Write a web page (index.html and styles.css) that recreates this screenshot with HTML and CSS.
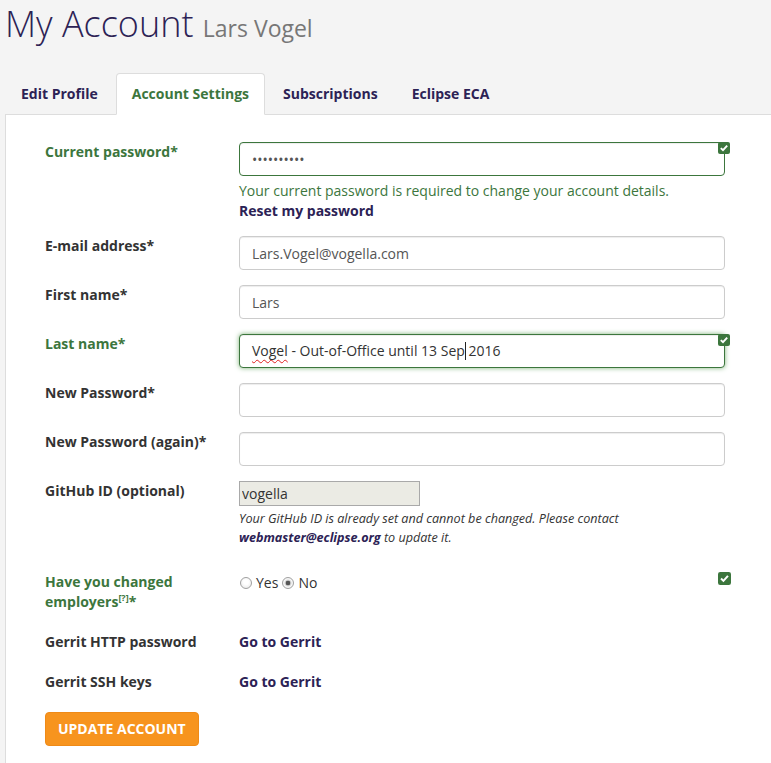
FILE: index.html
```html
<!DOCTYPE html>
<html lang="en">
<head>
<meta charset="utf-8">
<title>My Account</title>
<link rel="stylesheet" href="styles.css">
</head>
<body>
<div class="page">
  <h1 class="title">My Account <small>Lars Vogel</small></h1>
  <ul class="tabs">
    <li class="tab">Edit Profile</li>
    <li class="tab active">Account Settings</li>
    <li class="tab">Subscriptions</li>
    <li class="tab">Eclipse ECA</li>
  </ul>
  <div class="panel">
    <form class="form">
      <div class="row">
        <label class="lbl ok-text">Current password*</label>
        <div class="field">
          <input class="ctrl ok" type="password" value="xxxxxxxxxx">
          <svg class="fb" viewBox="0 0 12 12"><rect width="12" height="12" rx="2" fill="#3c763d"/><path d="M2.8 6.1 L5 8.2 L9.2 3.6" stroke="#fff" stroke-width="1.9" fill="none"/></svg>
          <p class="help">Your current password is required to change your account details.</p>
          <a class="link block">Reset my password</a>
        </div>
      </div>
      <div class="row">
        <label class="lbl">E-mail address*</label>
        <div class="field"><input class="ctrl" type="text" value="Lars.Vogel@vogella.com"></div>
      </div>
      <div class="row">
        <label class="lbl">First name*</label>
        <div class="field"><input class="ctrl" type="text" value="Lars"></div>
      </div>
      <div class="row">
        <label class="lbl ok-text">Last name*</label>
        <div class="field">
          <div class="ctrl ok glow" role="textbox"><span class="typo">Vogel</span> - Out-of-Office until 13 Sep<span class="caret"></span> 2016</div>
          <svg class="fb" viewBox="0 0 12 12"><rect width="12" height="12" rx="2" fill="#3c763d"/><path d="M2.8 6.1 L5 8.2 L9.2 3.6" stroke="#fff" stroke-width="1.9" fill="none"/></svg>
        </div>
      </div>
      <div class="row">
        <label class="lbl">New Password*</label>
        <div class="field"><input class="ctrl" type="password"></div>
      </div>
      <div class="row">
        <label class="lbl">New Password (again)*</label>
        <div class="field"><input class="ctrl" type="password"></div>
      </div>
      <div class="row">
        <label class="lbl">GitHub ID (optional)</label>
        <div class="field">
          <input class="gh" type="text" value="vogella" readonly>
          <p class="note">Your GitHub ID is already set and cannot be changed. Please contact <a class="link">webmaster@eclipse.org</a> to update it.</p>
        </div>
      </div>
      <div class="row tight">
        <label class="lbl ok-text">Have you changed employers<sup class="sup">[?]</sup>*</label>
        <div class="field">
          <div class="radios">
            <label class="radio"><input type="radio" name="emp">Yes</label>
            <label class="radio"><input type="radio" name="emp" checked>No</label>
          </div>
          <svg class="fb fb-lg" viewBox="0 0 12 12"><rect width="12" height="12" rx="2" fill="#3c763d"/><path d="M2.8 6.1 L5 8.2 L9.2 3.6" stroke="#fff" stroke-width="1.9" fill="none"/></svg>
        </div>
      </div>
      <div class="row plain">
        <span class="lbl">Gerrit HTTP password</span>
        <a class="link">Go to Gerrit</a>
      </div>
      <div class="row plain">
        <span class="lbl">Gerrit SSH keys</span>
        <a class="link">Go to Gerrit</a>
      </div>
      <button class="btn" type="button">Update Account</button>
    </form>
  </div>
</div>
</body>
</html>
```
FILE: styles.css
```css
* { box-sizing: border-box; }
html, body { overflow: hidden; }
body {
  margin: 0;
  background: #f4f4f4;
  font-family: "Open Sans", "Liberation Sans", sans-serif;
  font-size: 14px;
  line-height: 20px;
  color: #333;
}
.page { padding-left: 5px; }
.title {
  margin: 0 0 25px;
  padding-top: 4px;
  font-size: 36px;
  line-height: 40px;
  font-weight: 300;
  color: #2c2255;
}
.title small {
  font-size: 23px;
  font-weight: 400;
  color: #777;
}
.tabs {
  display: flex;
  list-style: none;
  margin: 0;
  padding: 0;
  border-bottom: 1px solid #ddd;
}
.tab {
  margin-right: 2px;
  margin-bottom: -1px;
  padding: 10px 15px;
  border: 1px solid transparent;
  border-radius: 4px 4px 0 0;
  font-weight: 700;
  color: #2c2255;
}
.tab.active {
  background: #fff;
  border-color: #ddd;
  border-bottom-color: transparent;
  color: #3c763d;
}
.panel {
  background: #fff;
  border-left: 1px solid #ddd;
  padding: 27px 0 40px 39px;
}
.row {
  display: flex;
  margin-bottom: 15px;
}
.row.tight { margin-bottom: 13px; }
.row.plain { padding-top: 7px; margin-bottom: 13px; }
.lbl {
  flex: none;
  width: 194px;
  font-weight: 700;
  color: #333;
}
.ok-text { color: #3c763d; }
.field {
  position: relative;
  width: 486px;
}
.ctrl {
  display: block;
  width: 100%;
  height: 34px;
  padding: 6px 12px;
  border: 1px solid #ccc;
  border-radius: 4px;
  background: #fff;
  font: inherit;
  color: #555;
  box-shadow: inset 0 1px 1px rgba(0,0,0,.075);
}
.ctrl.ok { border-color: #3c763d; }
.ctrl.glow { box-shadow: inset 0 1px 1px rgba(0,0,0,.075), 0 0 5px #7fb37a; color: #333; }
.typo {
  text-decoration: underline wavy #e02020;
  text-decoration-thickness: 1px;
  text-underline-offset: 3px;
}
.caret {
  display: inline-block;
  width: 1px;
  height: 18px;
  margin-right: -1px;
  background: #222;
  vertical-align: -4px;
}
.fb {
  position: absolute;
  top: 0;
  right: -5px;
  width: 12px;
  height: 12px;
}
.fb.fb-lg { width: 13px; height: 13px; right: -6px; }
.help {
  margin: 5px 0 0;
  color: #3c763d;
}
.link {
  font-weight: 700;
  color: #2c2255;
  text-decoration: none;
}
.block { display: block; }
.gh {
  display: block;
  width: 181px;
  height: 25px;
  padding: 0 2px;
  border: 1px solid #a9a9a9;
  border-radius: 0;
  background: #ebebe4;
  font: inherit;
  color: #333;
}
.note {
  margin: 3px 0 10px;
  font-size: 12.6px;
  line-height: 19px;
  font-style: italic;
}
.sup {
  font-size: 9px;
  line-height: 1;
  vertical-align: 6px;
}
.radios {
  display: flex;
  align-items: center;
  padding-top: 1px;
}
.radio {
  display: flex;
  align-items: center;
  margin-right: 3px;
}
.radio input {
  appearance: none;
  -webkit-appearance: none;
  margin: 0 4px 0 1px;
  width: 12px;
  height: 12px;
  border: 1px solid #a0a0a0;
  border-radius: 50%;
  background: radial-gradient(circle at 50% 40%, #fff 0, #fff 30%, #e4e4e4 100%);
  position: relative;
}
.radio input:checked {
  background: radial-gradient(circle, #555 0, #555 2px, #c8c8c8 2.6px, #fafafa 4px, #e4e4e4 100%);
}
.btn {
  margin-top: 7px;
  padding: 6px 12px;
  border: 1px solid #ef8a17;
  border-radius: 4px;
  background: #f7941e;
  color: #fff;
  font: 700 14px/20px "Open Sans", "Liberation Sans", sans-serif;
  text-transform: uppercase;
}
```
